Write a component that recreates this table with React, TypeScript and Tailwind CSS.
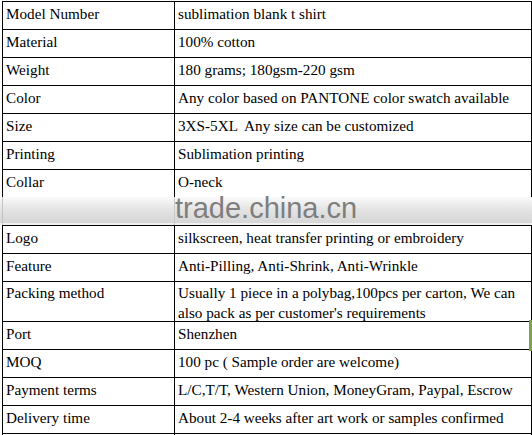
const rowsTop: [string, string][] = [
  ['Model Number', 'sublimation blank t shirt'],
  ['Material', '100% cotton'],
  ['Weight', '180 grams; 180gsm-220 gsm'],
  ['Color', 'Any color based on PANTONE color swatch available'],
  ['Size', '3XS-5XL  Any size can be customized'],
  ['Printing', 'Sublimation printing'],
];

const rowsBottom: [string, string][] = [
  ['Logo', 'silkscreen, heat transfer printing or embroidery'],
  ['Feature', 'Anti-Pilling, Anti-Shrink, Anti-Wrinkle'],
];

const rowsEnd: [string, string][] = [
  ['MOQ', '100 pc ( Sample order are welcome)'],
  ['Payment terms', 'L/C,T/T, Western Union, MoneyGram, Paypal, Escrow'],
  ['Delivery time', 'About 2-4 weeks after art work or samples confirmed'],
];

function Row({ label, value }: { label: string; value: string }) {
  return (
    <div className="flex h-[28px] border-b border-black">
      <div className="w-[172px] shrink-0 border-l border-black pl-[3px] pt-[1px] whitespace-pre">{label}</div>
      <div className="flex-1 border-l border-r border-black pl-[3px] pt-[1px] whitespace-pre">{value}</div>
    </div>
  );
}

export default function App() {
  return (
    <div className="w-[532px] h-[435px] overflow-hidden bg-white text-black text-[15.2px] leading-[21px] font-['Liberation_Serif','Times_New_Roman',serif]">
      <div className="pt-[1px] pl-[2px]">
        <div className="border-t border-black">
          {rowsTop.map(([l, v]) => (
            <Row key={l} label={l} value={v} />
          ))}
          {/* Collar row, cut by the watermark band */}
          <div className="flex h-[27px]">
            <div className="w-[172px] shrink-0 border-l border-black pl-[3px] pt-[1px]">Collar</div>
            <div className="flex-1 border-l border-r border-black pl-[3px] pt-[1px]">O-neck</div>
          </div>
        </div>
      </div>

      {/* watermark band */}
      <div className="relative h-[28px] w-[532px]">
        <div className="h-[26px] bg-gradient-to-b from-[#fafafa] via-[#e3e3e3] to-[#d6d6d6]" />
        <div className="h-[2px] bg-[#f0f0f0]" />
        <div className="absolute left-[2px] top-0 h-[28px] w-px bg-[#c4c4c4]" />
        <div className="absolute left-[174px] top-0 h-[28px] w-px bg-[#cacaca]" />
        <div className="absolute left-[175px] top-[-6px] text-[29px] leading-[34px] text-[#7e7e7e] font-['Liberation_Sans',Arial,sans-serif]">
          trade.china.cn
        </div>
      </div>

      <div className="pl-[2px]">
        <div className="border-t border-black">
          {rowsBottom.map(([l, v]) => (
            <Row key={l} label={l} value={v} />
          ))}
          <div className="flex h-[40px] border-b border-black leading-[20px]">
            <div className="w-[172px] shrink-0 border-l border-black pl-[3px] pt-[1px]">Packing method</div>
            <div className="flex-1 border-l border-r border-black pl-[3px] pt-[1px] whitespace-nowrap">
              Usually 1 piece in a polybag,100pcs per carton, We can
              <br />
              also pack as per customer's requirements
            </div>
          </div>
          <div className="relative flex h-[28px] border-b border-black">
            <div className="w-[172px] shrink-0 border-l border-black pl-[3px] pt-[1px]">Port</div>
            <div className="flex-1 border-l border-r border-black pl-[3px] pt-[1px]">Shenzhen</div>
            <div className="absolute right-0 top-[-2px] h-[31px] w-[3px] bg-[#7ca150]" />
          </div>
          {rowsEnd.map(([l, v]) => (
            <Row key={l} label={l} value={v} />
          ))}
          <div className="flex h-[4px]">
            <div className="w-[172px] shrink-0 border-l border-black" />
            <div className="flex-1 border-l border-r border-black" />
          </div>
        </div>
      </div>
    </div>
  );
}
